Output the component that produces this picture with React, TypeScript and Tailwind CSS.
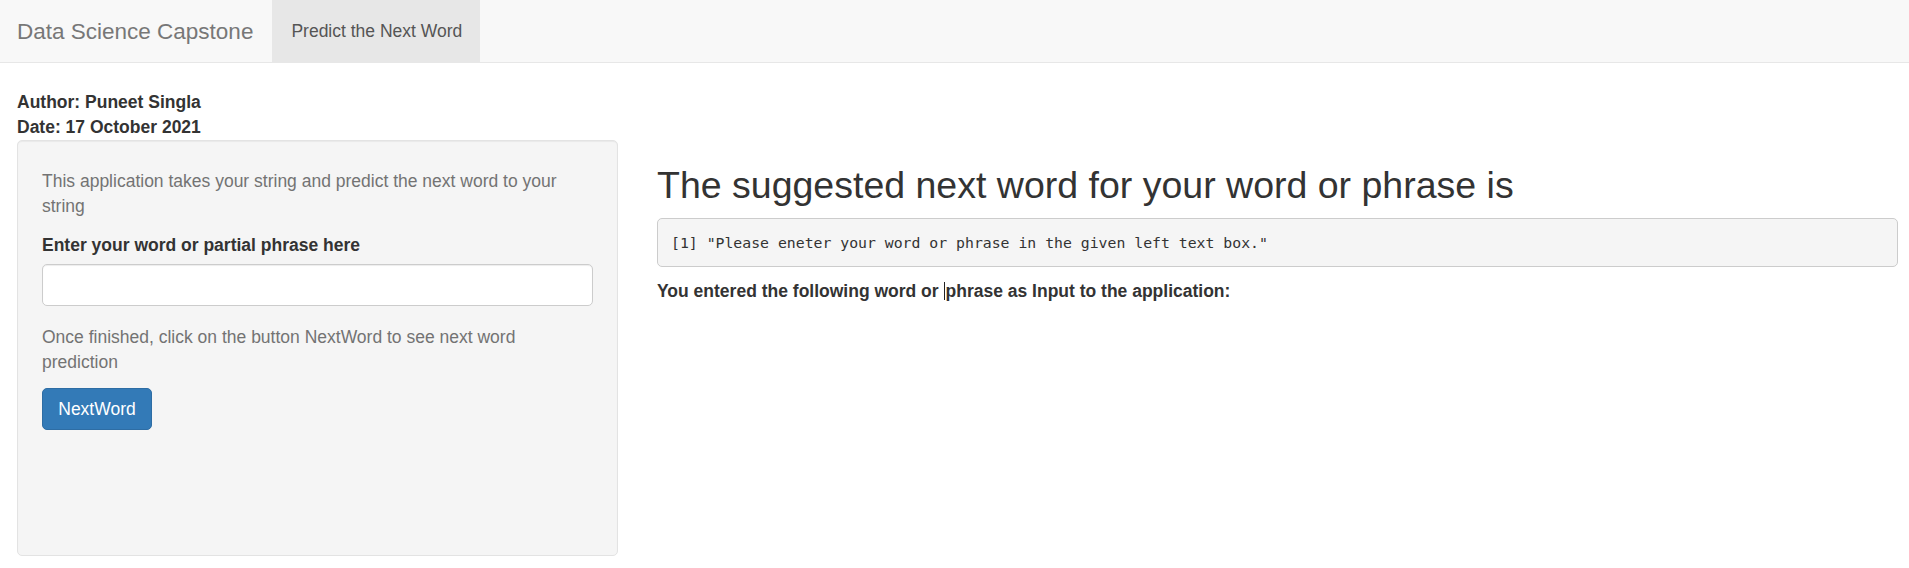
const sans = 'font-["Liberation_Sans",Arial,sans-serif]'

function NavBar() {
  return (
    <nav className="flex h-[63px] items-stretch border-b border-[#e7e7e7] bg-[#f8f8f8]">
      <div className="flex items-center whitespace-nowrap pl-[17px] pr-[19px] text-[22.5px] leading-[25px] text-[#777]">
        Data Science Capstone
      </div>
      <div className="flex w-[208px] items-center whitespace-nowrap bg-[#e7e7e7] px-[19px] text-[17.5px] leading-[25px] text-[#555]">
        Predict the Next Word
      </div>
    </nav>
  )
}

function Sidebar() {
  return (
    <div className="h-[416px] rounded-[5px] border border-[#e3e3e3] bg-[#f5f5f5] p-[24px] shadow-[inset_0_1px_1px_rgba(0,0,0,0.05)]">
      <p className="mt-[4px] mb-[14px] text-[#737373]">
        This application takes your string and predict the next word to your string
      </p>
      <label className="mb-[6px] block font-bold text-[#333]">
        Enter your word or partial phrase here
      </label>
      <input
        type="text"
        className="block h-[42px] w-full rounded-[5px] border border-[#ccc] bg-white px-[15px] shadow-[inset_0_1px_1px_rgba(0,0,0,0.075)] outline-none"
      />
      <p className="mt-[19px] mb-[13px] text-[#737373]">
        Once finished, click on the button NextWord to see next word prediction
      </p>
      <button className="h-[42px] w-[110px] rounded-[5px] border border-[#2e6da4] bg-[#337ab7] text-[17.5px] text-white">
        NextWord
      </button>
    </div>
  )
}

function MainPanel() {
  return (
    <div>
      <h2 className="mt-[25px] mb-[12px] text-[37.5px] leading-[41px] font-normal text-[#333]">
        The suggested next word for your word or phrase is
      </h2>
      <pre className='h-[49px] rounded-[5px] border border-[#ccc] bg-[#f5f5f5] px-[13px] py-[12px] font-["DejaVu_Sans_Mono",Consolas,monospace] text-[14.8px] leading-[23px] text-[#333]'>
        [1] "Please eneter your word or phrase in the given left text box."
      </pre>
      <p className="mt-[12px] font-bold text-[#333]">
        You entered the following word or{' '}
        <span className="mr-px inline-block h-[18px] w-px bg-[#222] align-[-3px]" />
        phrase as Input to the application:
      </p>
    </div>
  )
}

export default function App() {
  return (
    <main className={`min-h-[568px] bg-white text-[17.5px] leading-[25px] text-[#333] ${sans}`}>
      <NavBar />
      <div className="mt-[27px] pl-[17px] pr-[11px]">
        <div className="font-bold">
          <div>Author: Puneet Singla</div>
          <div>Date: 17 October 2021</div>
        </div>
        <div className="grid grid-cols-[601px_1fr] gap-[39px]">
          <Sidebar />
          <MainPanel />
        </div>
      </div>
    </main>
  )
}
